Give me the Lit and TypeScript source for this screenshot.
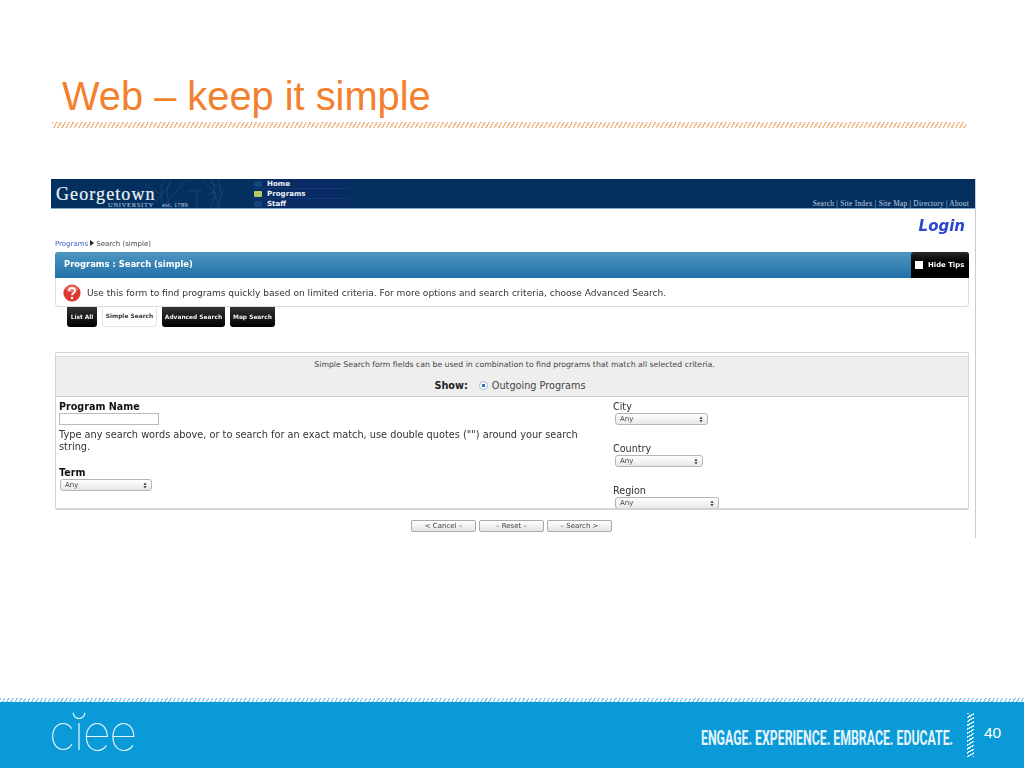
import { LitElement, html, css, svg } from "lit";
import { customElement } from "lit/decorators.js";

@customElement("app-root")
export class AppRoot extends LitElement {
  static styles = css`
    :host { display: block; width: 1024px; height: 768px; background: #fff; overflow: hidden; font-family: "DejaVu Sans", sans-serif; }
    .slide { width: 1024px; height: 768px; display: flex; flex-direction: column; }
    .title { margin: 71px 0 0 62px; height: 51px; font: 39.8px/50px "Liberation Sans", sans-serif; color: #f2802c; }
    .rule { margin-left: 52px; width: 914px; height: 6px; background: repeating-linear-gradient(120deg, #f0bd90 0 1.5px, #fff 1.5px 3.6px); }
    .shot { margin: 51px 0 0 51px; width: 924px; height: 359px; border-right: 1px solid #ccc; filter: blur(0.3px); display: flex; flex-direction: column; color: #333; }
    .top { height: 29px; background: #03305f; border-bottom: 1px solid #7fb0d4; display: flex; position: relative; flex: none; }
    .brand { width: 202px; flex: none; padding-left: 5px; color: #eef2f6; position: relative; overflow: hidden; box-sizing: border-box; }
    .brand svg { position: absolute; left: 90px; top: 0; }
    .gt { font: 18px/13px "Liberation Serif", serif; letter-spacing: 1.1px; margin-top: 9px; position: relative; -webkit-text-stroke: .2px #eef2f6; }
    .uni { position: relative; display: flex; gap: 8px; margin: 0 0 0 52px; font: 6.5px/7px "Liberation Serif", serif; letter-spacing: .7px; color: #c6d3e0; }
    .uni span + span { letter-spacing: .3px; }
    .nav { width: 97px; flex: none; box-sizing: border-box; background: #0a2c64; display: grid; grid-template-rows: repeat(3, 1fr); }
    .nav div { display: flex; align-items: center; gap: 5px; padding-left: 1px; font: bold 7.1px/9px "DejaVu Sans", sans-serif; color: #eef2f7; border-bottom: 1px solid #0f3a76; }
    .nav div:last-child { border-bottom: 0; }
    .nav i { width: 8px; height: 6px; background: #14427a; border-radius: 1px; }
    .nav i.on { background: #b4c95e; }
    .links { margin-left: auto; align-self: flex-end; padding: 0 6px 0 0; font: 7.4px/9px "Liberation Serif", serif; letter-spacing: .24px; color: #c3d1e0; white-space: nowrap; }
    .body { padding: 0 6px 0 4px; flex: 1; min-height: 0; display: flex; flex-direction: column; }
    .login { height: 29px; text-align: right; padding-right: 4px; font: italic bold 15px/34px "DejaVu Sans", sans-serif; color: #2b47cf; }
    .crumb { height: 14px; font-size: 7px; line-height: 12px; color: #444; }
    .crumb a { color: #3c5cc8; }
    .crumb svg { margin: 0 2px; }
    .bar { height: 26px; border-radius: 3px 3px 0 0; background: linear-gradient(#4f97c2, #2170a7); display: flex; align-items: center; justify-content: space-between; color: #fff; flex: none; }
    .bar h1 { margin: 0 0 2px 9px; font: bold 8.4px/12px "DejaVu Sans", sans-serif; }
    .hide { width: 58px; height: 26px; box-sizing: border-box; background: linear-gradient(#2b2b2b, #000 40%); border-radius: 3px 3px 0 0; display: flex; align-items: center; gap: 5px; padding-left: 4px; font: bold 6.9px/10px "DejaVu Sans", sans-serif; white-space: nowrap; }
    .hide i { width: 8px; height: 8px; background: #fff; flex: none; }
    .tip { height: 29px; box-sizing: border-box; border: 1px solid #ddd; border-top: 0; border-radius: 0 0 4px 4px; display: flex; align-items: center; gap: 6px; padding: 1px 0 0 7px; font-size: 9.06px; color: #333; flex: none; }
    .tabs { height: 20px; margin-left: 12px; display: flex; gap: 5px; flex: none; }
    .tab { background: linear-gradient(#333, #000); color: #f2f2f2; font: bold 5.9px/20px "DejaVu Sans", sans-serif; border-radius: 0 0 3px 3px; text-align: center; white-space: nowrap; }
    .tab.on { background: #fff; color: #333; border: 1px solid #e6e6e6; border-top: 0; line-height: 19px; box-sizing: border-box; }
    .form { margin-top: 25px; height: 158px; box-sizing: border-box; border: 1px solid #d4d4d4; border-width: 1px 1px 2px; border-radius: 2px; flex: none; overflow: hidden; display: flex; flex-direction: column; }
    .gray { margin-top: 3px; height: 41px; background: #eee; border-top: 1px solid #ddd; border-bottom: 1px solid #ccc; box-sizing: border-box; text-align: center; flex: none; }
    .gray p { margin: 0; padding-left: 5px; font-size: 7.76px; line-height: 16px; color: #444; }
    .show { display: flex; justify-content: center; align-items: center; height: 24px; padding-right: 4px; font-size: 9.7px; color: #444; }
    .show b { color: #222; margin-right: 11px; }
    .radio { width: 7px; height: 7px; margin-right: 4px; border-radius: 50%; border: 1px solid #9db8d8; background: radial-gradient(circle, #2a6fc0 0 1.5px, #fff 2px); }
    .cols { flex: 1; min-height: 0; display: grid; grid-template-columns: 554px 1fr; padding: 4px 0 0 3px; font-size: 9.6px; color: #333; overflow: hidden; }
    .lbl { line-height: 11px; }
    .lbl.b { font-weight: bold; color: #111; }
    .input { width: 98px; height: 10px; border: 1px solid #bbb; margin-top: 1px; }
    .help { width: 530px; margin: 4px 0 14px; line-height: 12px; font-size: 9.78px; }
    .sel { height: 12px; box-sizing: border-box; border: 1px solid #b5b5b5; border-radius: 3px; background: linear-gradient(#fff, #e8e8e8); display: flex; justify-content: space-between; align-items: center; padding: 0 4px; font-size: 7px; color: #444; margin-top: 1px; margin-left: 1px; }
    .right .lbl { margin-top: 18px; }
    .right .lbl:first-child { margin-top: 0; }
    .right .sel { margin-left: 2px; }
    .btns { margin: 10px 0 0 356px; display: flex; gap: 3px; flex: none; }
    .btn { width: 65px; height: 12px; box-sizing: border-box; border: 1px solid #aaa; border-radius: 2px; background: linear-gradient(#fff, #e4e4e4); text-align: center; font-size: 7px; line-height: 10px; color: #444; }
    .footer { margin-top: auto; flex: none; }
    .frule { height: 4px; background: repeating-linear-gradient(120deg, #8ccbe9 0 1.4px, #fff 1.4px 3.6px); }
    .fbar { height: 66px; background: #0a9ad8; display: flex; align-items: center; position: relative; color: #fff; }
    .logo { margin-left: 49px; font: 100 49px/50px Inter, sans-serif; letter-spacing: -1.5px; color: #eaf6fc; margin-top: -4px; }
    .tag { margin-left: auto; margin-top: 6px; width: 253px; font: 700 20px/20px Roboto, sans-serif; white-space: nowrap; color: #e4f4fb; transform: scaleX(.615); transform-origin: left center; }
    .mark { width: 7px; height: 44px; margin: 0 0 0 13px; background: repeating-linear-gradient(150deg, #d7eff9 0 1.4px, transparent 1.4px 3.4px); }
    .num { width: 50px; padding-left: 10px; box-sizing: border-box; font: 15.5px/18px "Liberation Sans", sans-serif; margin-top: -5px; }
  `;

  private sel(w: number) {
    return html`<div class="sel" style="width:${w}px"><span>Any</span><svg width="4" height="7" viewBox="0 0 4 7" fill="#444"><path d="M2 .5 3.6 3H.4zM2 6.5 3.6 4H.4z"/></svg></div>`;
  }

  render() {
    const seal = svg`<svg width="110" height="29" viewBox="0 0 110 29" fill="none" stroke="#234b7d" stroke-width=".7">
      <circle cx="50" cy="14" r="30"/><circle cx="50" cy="14" r="24"/>
      <path d="M10 28 30 4M22 28 44 2M62 2c8 6 14 14 16 27M70 4c6 2 10 8 12 12M56 10v19M46 12h14M66 16l8-4M68 22l8-4M4 6l14 8"/></svg>`;
    return html`<div class="slide">
      <div class="title">Web – keep it simple</div>
      <div class="rule"></div>
      <div class="shot">
        <div class="top">
          <div class="brand">${seal}
            <div class="gt">Georgetown</div>
            <div class="uni"><span>UNIVERSITY</span><span>est. 1789</span></div>
          </div>
          <div class="nav">
            <div><i></i>Home</div>
            <div><i class="on"></i>Programs</div>
            <div><i></i>Staff</div>
          </div>
          <div class="links">Search | Site Index | Site Map | Directory | About</div>
        </div>
        <div class="body">
          <div class="login">Login</div>
          <div class="crumb"><a>Programs</a><svg width="4" height="6" viewBox="0 0 4 6" fill="#222"><path d="M0 0 4 3 0 6z"/></svg>Search (simple)</div>
          <div class="bar"><h1>Programs : Search (simple)</h1><div class="hide"><i></i>Hide Tips</div></div>
          <div class="tip">
            <svg width="18" height="18" viewBox="0 0 18 18"><circle cx="9" cy="9" r="8.6" fill="#dc3a30"/><ellipse cx="9" cy="5" rx="6" ry="3.4" fill="#ef6d60"/>
              <path d="M6 7c0-4 6-4 6 0 0 2-3 2-3 4.2" fill="none" stroke="#fff" stroke-width="1.8"/><circle cx="9" cy="14" r="1.2" fill="#fff"/></svg>
            <span>Use this form to find programs quickly based on limited criteria. For more options and search criteria, choose Advanced Search.</span>
          </div>
          <div class="tabs">
            <div class="tab" style="width:30px">List All</div>
            <div class="tab on" style="width:55px">Simple Search</div>
            <div class="tab" style="width:63px">Advanced Search</div>
            <div class="tab" style="width:45px">Map Search</div>
          </div>
          <div class="form">
            <div class="gray">
              <p>Simple Search form fields can be used in combination to find programs that match all selected criteria.</p>
              <div class="show"><b>Show:</b><span class="radio"></span><span>Outgoing Programs</span></div>
            </div>
            <div class="cols">
              <div>
                <div class="lbl b">Program Name</div>
                <div class="input"></div>
                <div class="help">Type any search words above, or to search for an exact match, use double quotes ("") around your search string.</div>
                <div class="lbl b">Term</div>
                ${this.sel(92)}
              </div>
              <div class="right">
                <div class="lbl">City</div>${this.sel(93)}
                <div class="lbl">Country</div>${this.sel(88)}
                <div class="lbl">Region</div>${this.sel(104)}
              </div>
            </div>
          </div>
          <div class="btns">
            <div class="btn">&lt; Cancel –</div><div class="btn">– Reset –</div><div class="btn">– Search &gt;</div>
          </div>
        </div>
      </div>
      <div class="footer">
        <div class="frule"></div>
        <div class="fbar">
          <div class="logo">cĭee</div>
          <div class="tag">ENGAGE. EXPERIENCE. EMBRACE. EDUCATE.</div>
          <div class="mark"></div>
          <div class="num">40</div>
        </div>
      </div>
    </div>`;
  }
}
